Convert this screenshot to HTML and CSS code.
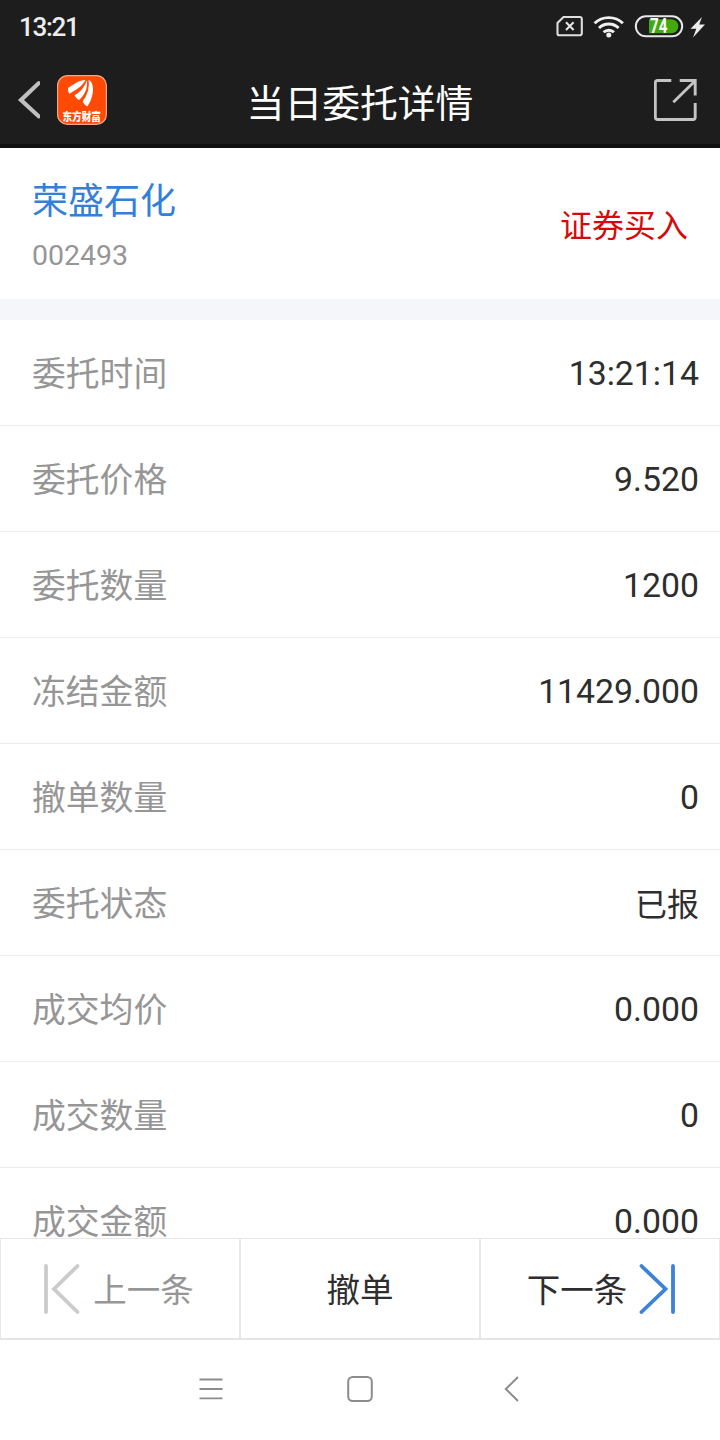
FILE: index.html
```html
<!DOCTYPE html>
<html lang="zh-CN">
<head>
<meta charset="utf-8">
<title>当日委托详情</title>
<link rel="stylesheet" href="styles.css">
</head>
<body>
<div class="screen">
  <header class="top">
    <div class="status">
      <span class="clock">13:21</span>
      <svg class="status-icons" width="152" height="30" viewBox="0 0 152 30" fill="none">
        <path d="M7.500 5H24a1.800 1.800 0 0 1 1.800 1.800V21.500a1.800 1.800 0 0 1-1.800 1.800H3.300a1.800 1.800 0 0 1-1.800-1.800V11z" stroke="#dedede" stroke-width="2.100"/>
        <path d="M10 10.200l7.600 7.800M17.600 10.200L10 18" stroke="#e6e6e6" stroke-width="2"/>
        <g stroke="#efefef" stroke-width="2.900">
          <path d="M38.600 11.300c7.700-7.600 20.600-7.600 28.300 0"/>
          <path d="M43 16c5.400-5.300 14.200-5.300 19.600 0"/>
          <path d="M47.600 20.300c2.900-2.800 7.500-2.800 10.400 0"/>
        </g>
        <circle cx="52.800" cy="23" r="2.500" fill="#efefef"/>
        <rect x="79.800" y="4.300" width="46.400" height="20" rx="10" stroke="#e8e8e8" stroke-width="2"/>
        <path d="M93 7.300h22.300a7 7 0 0 1 0 14H93z" fill="#42aa0d"/>
        <text class="battery" x="94" y="21" textLength="17.500" lengthAdjust="spacingAndGlyphs">74</text>
        <path d="M146 5L134.500 16.800h5.800L137 25.500l12-13h-5.800z" fill="#ececec"/>
      </svg>
    </div>
    <div class="title-bar">
      <div class="nav-left">
        <svg width="24" height="40" viewBox="0 0 24 40" fill="none"><path d="M22.700 3.200L5 20l17.700 16.300" stroke="#c0c0c0" stroke-width="4.200" stroke-linecap="round"/></svg>
        <svg class="logo" width="50" height="50" viewBox="0 0 50 50">
          <rect x=".6" y=".6" width="48.800" height="48.800" rx="10" fill="#ff4a05" stroke="#f3a787" stroke-width="1.200"/>
          <g fill="#fff">
            <path d="M11.200 12.800C16 10 21 5.500 28.500 4.800 25 12 19.500 14.500 12.300 18.800 11.200 17 10.800 14.800 11.200 12.800z"/>
            <path d="M17.500 20.200C23.500 17 27.500 12 29.800 5.200 31 13 28 19.500 22 25 20.300 24 18.300 22.300 17.500 20.200z"/>
            <path d="M25.800 26.300C30.500 20 32.600 13 31.600 4.800 37.500 7.500 37.800 20.500 30.500 31.500 28.500 30.600 26.300 28.800 25.800 26.300z"/>
          </g>
          <text class="logo-text" x="5.500" y="45.500" textLength="38.500" lengthAdjust="spacingAndGlyphs">东方财富</text>
        </svg>
      </div>
      <h1 class="title">当日委托详情</h1>
      <svg class="share" width="44" height="44" viewBox="0 0 44 44" fill="none" stroke="#c4c4c4" stroke-width="2.900">
        <path d="M17.300 2.500H3.500A2.200 2.200 0 0 0 1.300 4.700v34.600A2.200 2.200 0 0 0 3.500 41.500h35.500a2.200 2.200 0 0 0 2.200-2.200V25"/>
        <path d="M25.700 2.500h15.500V17.500M41 3L19.300 24.200"/>
      </svg>
    </div>
  </header>
  <section class="summary">
    <div>
      <div class="stock-name">荣盛石化</div>
      <div class="stock-code">002493</div>
    </div>
    <div class="side">证券买入</div>
  </section>
  <main class="rows">
    <div class="row"><span class="label">委托时间</span><span class="value">13:21:14</span></div>
    <div class="row"><span class="label">委托价格</span><span class="value">9.520</span></div>
    <div class="row"><span class="label">委托数量</span><span class="value">1200</span></div>
    <div class="row"><span class="label">冻结金额</span><span class="value">11429.000</span></div>
    <div class="row"><span class="label">撤单数量</span><span class="value">0</span></div>
    <div class="row"><span class="label">委托状态</span><span class="value cjk">已报</span></div>
    <div class="row"><span class="label">成交均价</span><span class="value">0.000</span></div>
    <div class="row"><span class="label">成交数量</span><span class="value">0</span></div>
    <div class="row"><span class="label">成交金额</span><span class="value">0.000</span></div>
  </main>
  <div class="actions">
    <div class="action prev">
      <svg width="38" height="50" viewBox="0 0 38 50" fill="none" stroke="#cbcbcb" stroke-width="3.800" stroke-linecap="round"><path d="M3 2v46M34.500 2L11 25l23.500 23"/></svg>
      <span>上一条</span>
    </div>
    <div class="action"><span>撤单</span></div>
    <div class="action next">
      <span>下一条</span>
      <svg width="38" height="50" viewBox="0 0 38 50" fill="none" stroke="#3b83d9" stroke-width="3.800" stroke-linecap="round"><path d="M35 2v46M3.500 2L27.500 25 3.500 48"/></svg>
    </div>
  </div>
  <nav class="system-nav">
    <svg width="24" height="24" viewBox="0 0 24 24" fill="none" stroke="#8c8c8c" stroke-width="1.900"><path d="M.5 2.500h23M.5 12h23M.5 21.400h23"/></svg>
    <svg width="26" height="26" viewBox="0 0 26 26" fill="none" stroke="#8c8c8c" stroke-width="2"><rect x="1.200" y="1" width="23.600" height="24" rx="4.500"/></svg>
    <svg width="24" height="26" viewBox="0 0 24 26" fill="none" stroke="#8c8c8c" stroke-width="2"><path d="M21 1L8.800 13 21 25"/></svg>
  </nav>
</div>
</body>
</html>
```
FILE: styles.css
```css
* { box-sizing: border-box; }
body {
  margin: 0;
  background: #fff;
  font-family: Roboto, "Noto Sans CJK SC", sans-serif;
  color: #2e2e2e;
}
svg { display: block; flex: none; }
.screen {
  width: 720px;
  height: 1440px;
  display: flex;
  flex-direction: column;
  overflow: hidden;
}
.top {
  flex: none;
  height: 148px;
  background: #1d1d1d;
  border-bottom: 4px solid #121112;
}
.status {
  height: 54px;
  padding: 12px 12px 0 19px;
  display: flex;
  justify-content: space-between;
  align-items: flex-start;
}
.clock {
  font-size: 26px;
  line-height: 30px;
  font-weight: 500;
  letter-spacing: -1.3px;
  color: #ececec;
}
.battery {
  font: 700 19.5px Roboto, sans-serif;
  fill: #fff;
}
.title-bar {
  height: 90px;
  padding: 0 22px 0 16px;
  display: grid;
  grid-template-columns: 1fr auto 1fr;
  align-items: center;
}
.nav-left {
  display: flex;
  align-items: center;
  gap: 17px;
  padding-top: 2px;
}
.logo-text {
  font: 900 11px "Noto Sans CJK SC", sans-serif;
  fill: #fff;
}
.title {
  margin: 9px 0 0 6px;
  font-size: 37.8px;
  line-height: 50px;
  font-weight: 400;
  color: #fff;
}
.share { justify-self: end; margin-top: 2px; }
.summary {
  flex: none;
  height: 172px;
  padding: 28px 32px 0 32px;
  border-bottom: 21px solid #f5f6f9;
  display: flex;
  justify-content: space-between;
}
.stock-name {
  font-size: 36px;
  line-height: 52px;
  color: #3380d8;
}
.stock-code {
  margin-top: 10px;
  font-size: 28.5px;
  line-height: 36px;
  color: #969696;
}
.side {
  padding-top: 27px;
  font-size: 32px;
  line-height: 46px;
  color: #d60a0a;
}
.rows { flex: 1; min-height: 0; overflow: hidden; }
.row {
  height: 106px;
  padding: 1px 21px 0 32px;
  border-bottom: 1px solid #ebecee;
  display: flex;
  justify-content: space-between;
  align-items: center;
  font-size: 33.8px;
  line-height: 50px;
}
.label { color: #969696; padding-top: 3px; }
.value { color: #2e2e2e; padding-top: 2px; }
.value.cjk { font-size: 32px; padding-top: 3px; }
.actions {
  flex: none;
  height: 102px;
  display: grid;
  grid-template-columns: 238px 240px 1fr;
  border: 1px solid #e8e8e8;
  border-bottom: 2px solid #e4e4e4;
}
.action {
  display: flex;
  align-items: center;
  justify-content: center;
  font-size: 33.5px;
  line-height: 50px;
}
.action span { padding-top: 4px; }
.action + .action { border-left: 2px solid #e8e8e8; }
.prev { gap: 12px; padding-right: 3px; color: #969696; }
.next { gap: 11px; padding-left: 3px; }
.system-nav {
  flex: none;
  height: 100px;
  padding: 0 199px 2px 199px;
  display: flex;
  justify-content: space-between;
  align-items: center;
}
```
